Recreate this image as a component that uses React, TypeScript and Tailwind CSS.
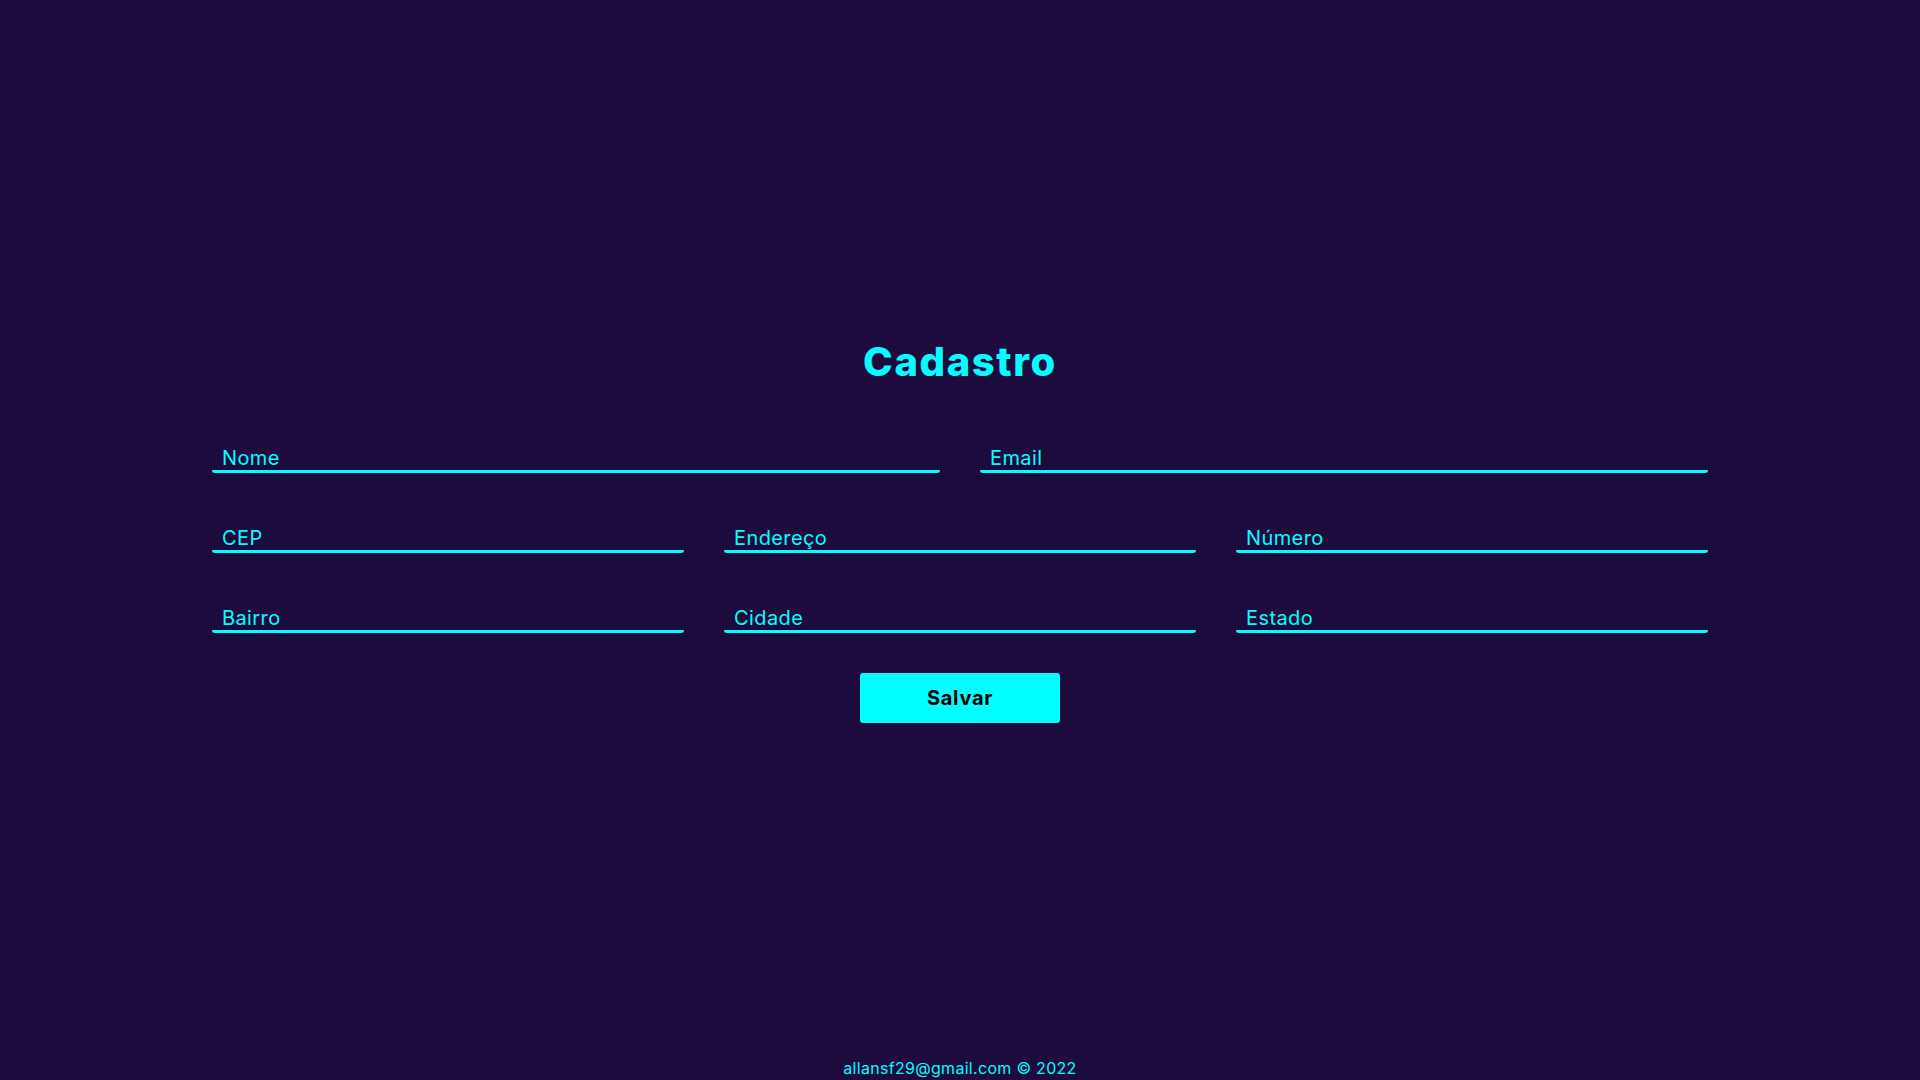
import React from "react";

function Field({ placeholder }: { placeholder: string }) {
  return (
    <input
      type="text"
      placeholder={placeholder}
      className="w-full h-[40px] pt-[12px] px-[10px] bg-transparent outline-none border-0 border-b-[3px] border-[#00ffff] rounded-[3px] text-[20px] leading-[24px] tracking-[0.4px] text-[#00ffff] placeholder:text-[#00ffff]"
    />
  );
}

export default function App() {
  return (
    <div className="h-screen w-full bg-[#1e0b3e] flex flex-col font-['Inter',sans-serif] overflow-hidden">
      <main className="flex flex-col items-center pt-[338px]">
        <h1 className="text-[40px] leading-[48px] font-extrabold tracking-[1.6px] text-[#00ffff]">Cadastro</h1>
        <form className="w-[1496px] mt-[47px] flex flex-col gap-10">
          <div className="grid grid-cols-2 gap-10">
            <Field placeholder="Nome" />
            <Field placeholder="Email" />
          </div>
          <div className="grid grid-cols-3 gap-10">
            <Field placeholder="CEP" />
            <Field placeholder="Endereço" />
            <Field placeholder="Número" />
          </div>
          <div className="grid grid-cols-3 gap-10">
            <Field placeholder="Bairro" />
            <Field placeholder="Cidade" />
            <Field placeholder="Estado" />
          </div>
          <div className="flex justify-center">
            <button
              type="button"
              className="w-[200px] h-[50px] bg-[#00ffff] text-black text-[20px] font-bold tracking-[0.7px] rounded-[3px]"
            >
              Salvar
            </button>
          </div>
        </form>
      </main>
      <footer className="mt-auto h-[24px] text-center text-[16px] leading-[24px] tracking-[0.3px] text-[#00ffff]">
        allansf29@gmail.com © 2022
      </footer>
    </div>
  );
}
